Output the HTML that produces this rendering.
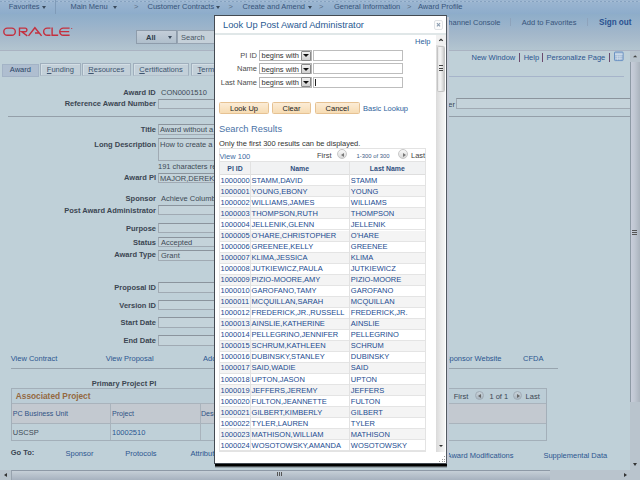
<!DOCTYPE html>
<html><head><meta charset="utf-8"><style>
html,body{margin:0;padding:0;width:640px;height:480px;overflow:hidden;position:relative;font-family:"Liberation Sans",sans-serif}
.t{position:absolute;white-space:nowrap}
.r{position:absolute}
.tri{position:absolute;width:0;height:0;border-left:2.5px solid transparent;border-right:2.5px solid transparent;border-top:3px solid #3a4a5c}
.tri2{position:absolute;width:0;height:0;border-left:2.5px solid transparent;border-right:2.5px solid transparent;border-bottom:3px solid #222}
.ltri{position:absolute;width:0;height:0;border-top:2px solid transparent;border-bottom:2px solid transparent;border-right:3px solid #666;left:2px;top:2px}
.rtri{position:absolute;width:0;height:0;border-top:2px solid transparent;border-bottom:2px solid transparent;border-left:3px solid #666;left:3px;top:2px}
.circ2{position:absolute;width:10px;height:10px;border-radius:50%;background:linear-gradient(#fafafa,#d8d8d8);border:1px solid #c8c8c8;box-sizing:border-box}
.circ{position:absolute;width:9px;height:9px;border-radius:50%;background:linear-gradient(#c9d3da,#aab6c0);border:1px solid #a0acb6;box-sizing:border-box}
</style></head><body>
<div class="r" style="left:0px;top:0px;width:640.00px;height:480.00px;background:#bfd0d8"></div>
<div class="r" style="left:0px;top:0px;width:640.00px;height:14.00px;background:linear-gradient(#9cb6d1,#8daccb)"></div>
<div class="r" style="left:0;top:1px;width:640px;height:1px;background:repeating-linear-gradient(90deg,#86a2c0 0 2px,#a6bdd5 2px 4px)"></div>
<div class="r" style="left:0px;top:14px;width:640.00px;height:36.00px;background:linear-gradient(#8eadc9 0px,#98b2cb 10px,#a1b6ca 18px,#a9bccc 26px,#b3c5d0 36px)"></div>
<div class="r" style="left:0px;top:50px;width:640.00px;height:1.00px;background:#aab3c2"></div>
<div class="t" style="left:8.75px;top:2.95px;font-size:7.5px;line-height:7.5px;color:#37547a;">Favorites</div>
<div class="tri" style="left:42px;top:6px"></div>
<div class="r" style="left:55px;top:0px;width:1.00px;height:14.00px;background:#7f9bb8"></div>
<div class="t" style="left:70.50px;top:2.95px;font-size:7.5px;line-height:7.5px;color:#37547a;">Main Menu</div>
<div class="tri" style="left:112.5px;top:6px"></div>
<div class="t" style="left:134.00px;top:2.95px;font-size:7.5px;line-height:7.5px;color:#5a6e85;">&gt;</div>
<div class="t" style="left:147.50px;top:2.95px;font-size:7.5px;line-height:7.5px;color:#37547a;">Customer Contracts</div>
<div class="tri" style="left:216px;top:6px"></div>
<div class="t" style="left:228.50px;top:2.95px;font-size:7.5px;line-height:7.5px;color:#5a6e85;">&gt;</div>
<div class="t" style="left:242.50px;top:2.95px;font-size:7.5px;line-height:7.5px;color:#37547a;">Create and Amend</div>
<div class="tri" style="left:307.5px;top:6px"></div>
<div class="t" style="left:319.00px;top:2.95px;font-size:7.5px;line-height:7.5px;color:#5a6e85;">&gt;</div>
<div class="t" style="left:334.00px;top:2.95px;font-size:7.5px;line-height:7.5px;color:#37547a;">General Information</div>
<div class="t" style="left:407.00px;top:2.95px;font-size:7.5px;line-height:7.5px;color:#5a6e85;">&gt;</div>
<div class="t" style="left:418.00px;top:2.95px;font-size:7.5px;line-height:7.5px;color:#37547a;">Award Profile</div>
<div class="t" style="right:139.50px;top:19.05px;font-size:7.5px;line-height:7.5px;color:#37547a;">Channel Console</div>
<div class="r" style="left:510px;top:18px;width:1.00px;height:8.00px;background:#8ea3bb"></div>
<div class="t" style="left:521.80px;top:19.05px;font-size:7.5px;line-height:7.5px;color:#37547a;">Add to Favorites</div>
<div class="r" style="left:587px;top:18px;width:1.00px;height:8.00px;background:#8ea3bb"></div>
<div class="t" style="left:599.00px;top:18.70px;font-size:8.15px;line-height:8.15px;color:#2b5190;font-weight:bold;">Sign out</div>
<svg class="r" style="left:0;top:0" width="80" height="50" viewBox="0 0 80 50"><g fill="none" stroke="#c4303f" stroke-width="1.4">
<rect x="3.8" y="28.1" width="11.5" height="7.1" rx="3.55"/>
<path d="M19.5 35.9V28.1H25.1A1.8 1.8 0 0 1 25.1 31.7H21.7L27.3 35.9"/>
<path d="M28.5 35.9L34.9 27.7L41.6 35.9M35 33H39.1"/>
<path d="M50.5 28.1H47.2A3.55 3.55 0 0 0 47.2 35.2H50.5"/>
<path d="M52.1 27.4V35.2H58.2"/>
<path d="M69.6 28.1H63.3A3.55 3.55 0 0 0 63.3 35.2H69.6M60.2 31.65H69.2"/>
</g><circle cx="71.7" cy="28.5" r="0.6" fill="#c4303f"/></svg>
<div class="r" style="left:136px;top:30px;width:41.00px;height:14.00px;background:linear-gradient(#c3cdd8,#b0bfcc);border:1px solid #8e9cab;box-sizing:border-box"></div>
<div class="t" style="left:146.00px;top:33.85px;font-size:7.5px;line-height:7.5px;color:#2c3a48;font-weight:bold;">All</div>
<div class="tri" style="left:168px;top:35.5px"></div>
<div class="r" style="left:176.5px;top:30px;width:38.50px;height:14.00px;background:#c5d0d9;border:1px solid #97a4b2;box-sizing:border-box"></div>
<div class="t" style="left:181.00px;top:34.05px;font-size:7.5px;line-height:7.5px;color:#4a5866;">Search</div>
<div class="t" style="left:471.50px;top:54.15px;font-size:7.5px;line-height:7.5px;color:#2c5690;">New Window</div>
<div class="r" style="left:518.6px;top:52.5px;width:0.90px;height:9.50px;background:#6b4a6e"></div>
<div class="t" style="left:523.70px;top:54.15px;font-size:7.5px;line-height:7.5px;color:#2c5690;">Help</div>
<div class="r" style="left:542.2px;top:52.5px;width:0.90px;height:9.50px;background:#6b4a6e"></div>
<div class="t" style="left:546.50px;top:54.15px;font-size:7.5px;line-height:7.5px;color:#2c5690;">Personalize Page</div>
<div class="r" style="left:609.2px;top:52.5px;width:0.90px;height:9.50px;background:#6b4a6e"></div>
<svg class="r" style="left:613px;top:51px" width="11" height="11" viewBox="0 0 11 11"><rect x="1.5" y="1" width="8.6" height="8.6" rx="0.8" fill="#a9bfd8" stroke="#6a92c3" stroke-width="1"/><rect x="2" y="2.6" width="7.6" height="1.1" fill="#d9e5f1"/><path d="M2.3 5.3H9.3M2.3 7.4H9.3M4.5 4.5V9.2M6.9 4.5V9.2" stroke="#d3dfec" stroke-width="0.6"/></svg>
<div class="r" style="left:2px;top:63.6px;width:36.70px;height:13.10px;background:#afbed0;border:1px solid #a3b3c6;box-sizing:border-box"></div>
<div class="t" style="left:-79.65px;width:200px;text-align:center;top:66.05px;font-size:7.5px;line-height:7.5px;color:#2a4466;">Award</div>
<div class="r" style="left:40px;top:63px;width:40.80px;height:12.60px;background:#c3d0d9;border:1px solid #a0afbd;border-bottom-color:#b3c1cc;box-sizing:border-box;box-shadow:inset 1px 1px 0 #d3dee5"></div>
<div class="t" style="left:-39.60px;width:200px;text-align:center;top:66.25px;font-size:7.5px;line-height:7.5px;color:#3d5470;"><u style="text-decoration-thickness:0.5px;text-underline-offset:0.8px">F</u>unding</div>
<div class="r" style="left:82px;top:63px;width:48.50px;height:12.60px;background:#c3d0d9;border:1px solid #a0afbd;border-bottom-color:#b3c1cc;box-sizing:border-box;box-shadow:inset 1px 1px 0 #d3dee5"></div>
<div class="t" style="left:6.25px;width:200px;text-align:center;top:66.25px;font-size:7.5px;line-height:7.5px;color:#3d5470;"><u style="text-decoration-thickness:0.5px;text-underline-offset:0.8px">R</u>esources</div>
<div class="r" style="left:132.6px;top:63px;width:56.80px;height:12.60px;background:#c3d0d9;border:1px solid #a0afbd;border-bottom-color:#b3c1cc;box-sizing:border-box;box-shadow:inset 1px 1px 0 #d3dee5"></div>
<div class="t" style="left:61.00px;width:200px;text-align:center;top:66.25px;font-size:7.5px;line-height:7.5px;color:#3d5470;"><u style="text-decoration-thickness:0.5px;text-underline-offset:0.8px">C</u>ertifications</div>
<div class="r" style="left:191.2px;top:63px;width:48.80px;height:12.60px;background:#c3d0d9;border:1px solid #a0afbd;border-bottom-color:#b3c1cc;box-sizing:border-box;box-shadow:inset 1px 1px 0 #d3dee5"></div>
<div class="t" style="left:197.50px;top:66.25px;font-size:7.5px;line-height:7.5px;color:#3d5470;"><u style="text-decoration-thickness:0.5px;text-underline-offset:0.8px">T</u>erms</div>
<div class="r" style="left:447px;top:75.8px;width:177.00px;height:1.00px;background:#a6b4ca"></div>
<div class="t" style="right:484.30px;top:89.05px;font-size:7.5px;line-height:7.5px;color:#3b4652;font-weight:bold;">Award ID</div>
<div class="t" style="left:161.00px;top:89.05px;font-size:7.5px;line-height:7.5px;color:#3e4a56;">CON0001510</div>
<div class="t" style="right:484.00px;top:99.65px;font-size:7.5px;line-height:7.5px;color:#3b4652;font-weight:bold;">Reference Award Number</div>
<div class="r" style="left:158px;top:99px;width:72.00px;height:10.00px;background:#c4d3da;border:1px solid #a0aab3;border-top-color:#8b949d;box-sizing:border-box"></div>
<div class="t" style="right:185.00px;top:100.65px;font-size:7.5px;line-height:7.5px;color:#3b4652;">er</div>
<div class="r" style="left:455.7px;top:98px;width:176.30px;height:11.30px;background:#c4d3da;border:1px solid #a0aab3;border-top-color:#8b949d;box-sizing:border-box"></div>
<div class="r" style="left:8px;top:116px;width:622.00px;height:1.00px;background:#949fa9"></div>
<div class="t" style="right:484.00px;top:126.15px;font-size:7.5px;line-height:7.5px;color:#3b4652;font-weight:bold;">Title</div>
<div class="r" style="left:158px;top:124px;width:72.00px;height:10.50px;background:#c4d3da;border:1px solid #a0aab3;border-top-color:#8b949d;box-sizing:border-box"></div>
<div class="t" style="left:160.00px;top:126.45px;font-size:7.5px;line-height:7.5px;color:#3e4a56;">Award without a</div>
<div class="t" style="right:484.00px;top:140.65px;font-size:7.5px;line-height:7.5px;color:#3b4652;font-weight:bold;">Long Description</div>
<div class="r" style="left:158px;top:138.3px;width:72.00px;height:22.90px;background:#c4d3da;border:1px solid #a0aab3;border-top-color:#8b949d;box-sizing:border-box"></div>
<div class="t" style="left:160.00px;top:140.65px;font-size:7.5px;line-height:7.5px;color:#3e4a56;">How to create a</div>
<div class="t" style="left:158.00px;top:163.15px;font-size:7.5px;line-height:7.5px;color:#3e4a56;">191 characters re</div>
<div class="t" style="right:484.00px;top:174.15px;font-size:7.5px;line-height:7.5px;color:#3b4652;font-weight:bold;">Award PI</div>
<div class="r" style="left:158px;top:172.5px;width:72.00px;height:10.00px;background:#c4d3da;border:1px solid #a0aab3;border-top-color:#8b949d;box-sizing:border-box"></div>
<div class="t" style="left:160.00px;top:174.65px;font-size:7.5px;line-height:7.5px;color:#3e4a56;">MAJOR,DEREK</div>
<div class="t" style="right:484.00px;top:195.45px;font-size:7.5px;line-height:7.5px;color:#3b4652;font-weight:bold;">Sponsor</div>
<div class="t" style="left:161.00px;top:195.45px;font-size:7.5px;line-height:7.5px;color:#3e4a56;">Achieve Columb</div>
<div class="t" style="right:484.00px;top:207.15px;font-size:7.5px;line-height:7.5px;color:#3b4652;font-weight:bold;">Post Award Administrator</div>
<div class="r" style="left:158px;top:205px;width:72.00px;height:10.00px;background:#c4d3da;border:1px solid #a0aab3;border-top-color:#8b949d;box-sizing:border-box"></div>
<div class="t" style="right:484.00px;top:224.65px;font-size:7.5px;line-height:7.5px;color:#3b4652;font-weight:bold;">Purpose</div>
<div class="r" style="left:158px;top:222.5px;width:72.00px;height:10.00px;background:#c4d3da;border:1px solid #a0aab3;border-top-color:#8b949d;box-sizing:border-box"></div>
<div class="t" style="right:484.00px;top:239.25px;font-size:7.5px;line-height:7.5px;color:#3b4652;font-weight:bold;">Status</div>
<div class="r" style="left:158px;top:237px;width:72.00px;height:9.80px;background:#c4d3da;border:1px solid #a0aab3;border-top-color:#8b949d;box-sizing:border-box"></div>
<div class="t" style="left:161.00px;top:239.45px;font-size:7.5px;line-height:7.5px;color:#3e4a56;">Accepted</div>
<div class="t" style="right:484.00px;top:251.45px;font-size:7.5px;line-height:7.5px;color:#3b4652;font-weight:bold;">Award Type</div>
<div class="r" style="left:158px;top:249.5px;width:72.00px;height:11.00px;background:#c4d3da;border:1px solid #a0aab3;border-top-color:#8b949d;box-sizing:border-box"></div>
<div class="t" style="left:161.00px;top:252.15px;font-size:7.5px;line-height:7.5px;color:#3e4a56;">Grant</div>
<div class="t" style="right:484.00px;top:284.25px;font-size:7.5px;line-height:7.5px;color:#3b4652;font-weight:bold;">Proposal ID</div>
<div class="r" style="left:158px;top:282px;width:72.00px;height:10.60px;background:#c4d3da;border:1px solid #a0aab3;border-top-color:#8b949d;box-sizing:border-box"></div>
<div class="t" style="right:484.00px;top:301.65px;font-size:7.5px;line-height:7.5px;color:#3b4652;font-weight:bold;">Version ID</div>
<div class="r" style="left:158px;top:299.6px;width:72.00px;height:10.80px;background:#c4d3da;border:1px solid #a0aab3;border-top-color:#8b949d;box-sizing:border-box"></div>
<div class="t" style="right:484.00px;top:319.15px;font-size:7.5px;line-height:7.5px;color:#3b4652;font-weight:bold;">Start Date</div>
<div class="r" style="left:158px;top:317px;width:72.00px;height:11.00px;background:#c4d3da;border:1px solid #a0aab3;border-top-color:#8b949d;box-sizing:border-box"></div>
<div class="t" style="right:484.00px;top:336.95px;font-size:7.5px;line-height:7.5px;color:#3b4652;font-weight:bold;">End Date</div>
<div class="r" style="left:158px;top:334.6px;width:72.00px;height:11.10px;background:#c4d3da;border:1px solid #a0aab3;border-top-color:#8b949d;box-sizing:border-box"></div>
<div class="t" style="left:10.70px;top:355.45px;font-size:7.5px;line-height:7.5px;color:#2c5690;">View Contract</div>
<div class="t" style="left:105.80px;top:355.45px;font-size:7.5px;line-height:7.5px;color:#2c5690;">View Proposal</div>
<div class="t" style="left:203.00px;top:355.45px;font-size:7.5px;line-height:7.5px;color:#2c5690;">Add</div>
<div class="t" style="right:138.50px;top:354.65px;font-size:7.5px;line-height:7.5px;color:#2c5690;">Sponsor Website</div>
<div class="t" style="left:523.00px;top:354.65px;font-size:7.5px;line-height:7.5px;color:#2c5690;">CFDA</div>
<div class="r" style="left:10.7px;top:368px;width:547.80px;height:1.00px;background:#98a4ae"></div>
<div class="t" style="left:91.70px;top:379.65px;font-size:7.5px;line-height:7.5px;color:#3b4652;font-weight:bold;">Primary Project PI</div>
<div class="r" style="left:10.7px;top:388px;width:535.90px;height:52.50px;border:1px solid #a3afb9;box-sizing:border-box;background:#bfd0d8"></div>
<div class="r" style="left:11.7px;top:389px;width:533.90px;height:14.50px;background:#bccdd6"></div>
<div class="t" style="left:15.80px;top:392.27px;font-size:8.3px;line-height:8.3px;color:#94693f;font-weight:bold;">Associated Project</div>
<div class="t" style="left:453.75px;top:392.65px;font-size:7.5px;line-height:7.5px;color:#3b4652;">First</div>
<div class="circ" style="left:474.7px;top:390.8px"><div class="ltri"></div></div>
<div class="t" style="left:489.40px;top:392.65px;font-size:7.5px;line-height:7.5px;color:#3b4652;">1 of 1</div>
<div class="circ" style="left:513px;top:390.8px"><div class="rtri"></div></div>
<div class="t" style="left:525.60px;top:392.65px;font-size:7.5px;line-height:7.5px;color:#3b4652;">Last</div>
<div class="r" style="left:11.7px;top:403px;width:533.90px;height:21.00px;background:#c3c9d0;border-top:1px solid #a9b3bc;border-bottom:1px solid #a9b3bc;box-sizing:border-box"></div>
<div class="r" style="left:110px;top:403px;width:1.00px;height:37.00px;background:#a9b3bc"></div>
<div class="r" style="left:200px;top:403px;width:1.00px;height:37.00px;background:#a9b3bc"></div>
<div class="t" style="left:12.80px;top:411.19px;font-size:7.1px;line-height:7.1px;color:#2f5385;">PC Business Unit</div>
<div class="t" style="left:112.00px;top:411.19px;font-size:7.1px;line-height:7.1px;color:#2f5385;">Project</div>
<div class="t" style="left:201.00px;top:411.19px;font-size:7.1px;line-height:7.1px;color:#2f5385;">Desc</div>
<div class="t" style="left:12.80px;top:429.15px;font-size:7.5px;line-height:7.5px;color:#3e4a56;">USCSP</div>
<div class="t" style="left:112.00px;top:429.15px;font-size:7.5px;line-height:7.5px;color:#2c5690;">10002510</div>
<div class="t" style="left:10.70px;top:448.65px;font-size:7.5px;line-height:7.5px;color:#3b4652;font-weight:bold;">Go To:</div>
<div class="t" style="left:65.50px;top:449.65px;font-size:7.5px;line-height:7.5px;color:#2c5690;">Sponsor</div>
<div class="t" style="left:125.30px;top:449.65px;font-size:7.5px;line-height:7.5px;color:#2c5690;">Protocols</div>
<div class="t" style="left:190.50px;top:449.65px;font-size:7.5px;line-height:7.5px;color:#2c5690;">Attributes</div>
<div class="t" style="right:126.50px;top:452.15px;font-size:7.5px;line-height:7.5px;color:#2c5690;">Award Modifications</div>
<div class="t" style="left:543.40px;top:452.15px;font-size:7.5px;line-height:7.5px;color:#2c5690;">Supplemental Data</div>
<div class="r" style="left:630px;top:51px;width:10.00px;height:419.00px;background:#b9c4cd"></div>
<div class="r" style="left:630.2px;top:62px;width:9.80px;height:340.00px;background:linear-gradient(90deg,#c8cdda,#c0c7d2 40%,#aab3bd);border-left:1px solid #8e9aa5;box-sizing:border-box"></div>
<div class="r" style="left:632px;top:229.8px;width:5.20px;height:0.80px;background:#555"></div>
<div class="r" style="left:632px;top:231.9px;width:5.20px;height:0.80px;background:#555"></div>
<div class="r" style="left:632px;top:234px;width:5.20px;height:0.80px;background:#555"></div>
<svg class="r" style="left:631px;top:53px" width="8" height="6" viewBox="0 0 8 6"><path d="M2 4.2L4.2 2.2L6.2 4.2Z" fill="#444"/></svg>
<div class="tri" style="left:632.5px;top:462.5px;border-top-color:#333"></div>
<div class="r" style="left:0px;top:469.8px;width:640.00px;height:10.20px;background:#b9c4cd"></div>
<div class="r" style="left:11.25px;top:470px;width:538.45px;height:10.00px;background:linear-gradient(#c6cfd7,#a7b2bf);border-top:1px solid #8e99a6;border-left:1px solid #98a3ae;box-sizing:border-box"></div>
<div class="ltri" style="left:3.5px;top:472.8px;border-right-color:#333"></div>
<div class="rtri" style="left:623.5px;top:472.8px;border-left-color:#333"></div>
<div class="r" style="left:630px;top:469.8px;width:10.00px;height:10.20px;background:#b9c4cd"></div>
<div class="r" style="left:277.2px;top:472px;width:0.80px;height:4.30px;background:#555"></div>
<div class="r" style="left:279.2px;top:472px;width:0.80px;height:4.30px;background:#555"></div>
<div class="r" style="left:281.2px;top:472px;width:0.80px;height:4.30px;background:#555"></div>
<div class="r" style="left:447px;top:17px;width:1.50px;height:446.00px;background:#c4cad6"></div>
<div class="r" style="left:215px;top:463px;width:232.00px;height:3.00px;background:#000"></div>
<div class="r" style="left:215px;top:466px;width:232.00px;height:2.00px;background:linear-gradient(rgba(0,0,0,.8),rgba(0,0,0,0))"></div>
<div class="r" style="left:214px;top:15px;width:233.00px;height:448.60px;background:#fff;border:1px solid #434a52;border-right:1.3px solid #535a62;box-sizing:border-box"></div>
<div class="t" style="left:223.00px;top:21.13px;font-size:9.3px;line-height:9.3px;color:#2a5a92;">Look Up Post Award Administrator</div>
<div class="r" style="left:433.5px;top:20.3px;width:9.00px;height:9.40px;border:1px solid #dfe2e5;box-sizing:border-box;border-radius:2px;background:#fbfbfb"></div>
<svg class="r" style="left:433.5px;top:20.3px" width="9" height="9.4" viewBox="0 0 9 9.4"><path d="M2.9 3.2L6.1 6.4M6.1 3.2L2.9 6.4" stroke="#8a9cb0" stroke-width="1.1"/></svg>
<div class="r" style="left:215px;top:33.3px;width:231.00px;height:1.70px;background:#e0e7e8"></div>
<div class="r" style="left:436.3px;top:35px;width:9.40px;height:417.00px;background:linear-gradient(90deg,#dadada,#ececec 60%,#f6f6f6);border-right:1px solid #fff;box-sizing:border-box"></div>
<div class="r" style="left:436.3px;top:35px;width:9.40px;height:10.00px;background:#f1f1f1"></div>
<svg class="r" style="left:437px;top:37px" width="8" height="6" viewBox="0 0 8 6"><path d="M2.2 3.9L4 2.3L5.8 3.9" fill="none" stroke="#333" stroke-width="1.1"/></svg>
<div class="r" style="left:437.3px;top:46px;width:7.50px;height:46.00px;background:linear-gradient(90deg,#e6e6e6,#f6f6f6 35%,#e2e2e2 70%,#c9c9c9);border:1px solid #c4c4c4;box-sizing:border-box;border-radius:1.5px"></div>
<div class="r" style="left:438.8px;top:65.4px;width:3.80px;height:0.70px;background:#444"></div>
<div class="r" style="left:438.8px;top:67.8px;width:3.80px;height:0.70px;background:#444"></div>
<div class="r" style="left:438.8px;top:70.2px;width:3.80px;height:0.70px;background:#444"></div>
<div class="tri" style="left:439.2px;top:445.2px;border-top-color:#333;border-left-width:2.2px;border-right-width:2.2px;border-top-width:2.6px"></div>
<div class="r" style="left:444px;top:456px;width:1.00px;height:1.00px;background:#999"></div>
<div class="r" style="left:441.5px;top:458.5px;width:1.00px;height:1.00px;background:#999"></div>
<div class="r" style="left:444px;top:458.5px;width:1.00px;height:1.00px;background:#999"></div>
<div class="r" style="left:439px;top:461px;width:1.00px;height:1.00px;background:#999"></div>
<div class="r" style="left:441.5px;top:461px;width:1.00px;height:1.00px;background:#999"></div>
<div class="r" style="left:444px;top:461px;width:1.00px;height:1.00px;background:#999"></div>
<div class="t" style="right:209.50px;top:38.35px;font-size:7.5px;line-height:7.5px;color:#2d5f9c;">Help</div>
<div class="t" style="right:383.00px;top:52.05px;font-size:7.5px;line-height:7.5px;color:#4d4d4d;">PI ID</div>
<div class="r" style="left:259px;top:50px;width:52.50px;height:11.00px;border:1px solid #b5b5b5;box-sizing:border-box;background:#fff"></div>
<div class="t" style="left:261.50px;top:52.45px;font-size:7.5px;line-height:7.5px;color:#333;">begins with</div>
<div class="r" style="left:300.6px;top:50.5px;width:10.40px;height:10.00px;background:linear-gradient(#f2f2f2,#cfcfcf);border:1px solid #8a8a8a;box-sizing:border-box;border-radius:1px"></div>
<div class="tri" style="left:302.8px;top:54.3px;border-top-color:#111;border-left-width:3px;border-right-width:3px;border-top-width:3.3px"></div>
<div class="r" style="left:313px;top:50px;width:90.00px;height:11.00px;border:1px solid #bdbdbd;box-sizing:border-box;background:#fff"></div>
<div class="t" style="right:383.00px;top:65.45px;font-size:7.5px;line-height:7.5px;color:#4d4d4d;">Name</div>
<div class="r" style="left:259px;top:63.3px;width:52.50px;height:11.00px;border:1px solid #b5b5b5;box-sizing:border-box;background:#fff"></div>
<div class="t" style="left:261.50px;top:65.75px;font-size:7.5px;line-height:7.5px;color:#333;">begins with</div>
<div class="r" style="left:300.6px;top:63.8px;width:10.40px;height:10.00px;background:linear-gradient(#f2f2f2,#cfcfcf);border:1px solid #8a8a8a;box-sizing:border-box;border-radius:1px"></div>
<div class="tri" style="left:302.8px;top:67.6px;border-top-color:#111;border-left-width:3px;border-right-width:3px;border-top-width:3.3px"></div>
<div class="r" style="left:313px;top:63.3px;width:90.00px;height:11.00px;border:1px solid #bdbdbd;box-sizing:border-box;background:#fff"></div>
<div class="t" style="right:383.00px;top:78.75px;font-size:7.5px;line-height:7.5px;color:#4d4d4d;">Last Name</div>
<div class="r" style="left:259px;top:76.7px;width:52.50px;height:11.00px;border:1px solid #b5b5b5;box-sizing:border-box;background:#fff"></div>
<div class="t" style="left:261.50px;top:79.15px;font-size:7.5px;line-height:7.5px;color:#333;">begins with</div>
<div class="r" style="left:300.6px;top:77.2px;width:10.40px;height:10.00px;background:linear-gradient(#f2f2f2,#cfcfcf);border:1px solid #8a8a8a;box-sizing:border-box;border-radius:1px"></div>
<div class="tri" style="left:302.8px;top:81.0px;border-top-color:#111;border-left-width:3px;border-right-width:3px;border-top-width:3.3px"></div>
<div class="r" style="left:313px;top:76.7px;width:90.00px;height:11.00px;border:1px solid #bdbdbd;box-sizing:border-box;background:#fff"></div>
<div class="r" style="left:314.5px;top:78.7px;width:0.80px;height:7.80px;background:#222"></div>
<div class="r" style="left:219.3px;top:102px;width:49.40px;height:12.40px;background:linear-gradient(#fcecd6,#f7dcb3);border:1px solid #e6c293;box-sizing:border-box;border-radius:1.5px"></div>
<div class="t" style="left:144.00px;width:200px;text-align:center;top:105.25px;font-size:7.5px;line-height:7.5px;color:#222;">Look Up</div>
<div class="r" style="left:272px;top:102px;width:39.00px;height:12.40px;background:linear-gradient(#fcecd6,#f7dcb3);border:1px solid #e6c293;box-sizing:border-box;border-radius:1.5px"></div>
<div class="t" style="left:191.50px;width:200px;text-align:center;top:105.25px;font-size:7.5px;line-height:7.5px;color:#222;">Clear</div>
<div class="r" style="left:314.6px;top:102px;width:45.40px;height:12.40px;background:linear-gradient(#fcecd6,#f7dcb3);border:1px solid #e6c293;box-sizing:border-box;border-radius:1.5px"></div>
<div class="t" style="left:237.30px;width:200px;text-align:center;top:105.25px;font-size:7.5px;line-height:7.5px;color:#222;">Cancel</div>
<div class="t" style="left:363.00px;top:105.25px;font-size:7.5px;line-height:7.5px;color:#2d5f9c;">Basic Lookup</div>
<div class="t" style="left:219.00px;top:124.63px;font-size:9.3px;line-height:9.3px;color:#4a72a6;">Search Results</div>
<div class="t" style="left:219.00px;top:140.05px;font-size:7.5px;line-height:7.5px;color:#333;">Only the first 300 results can be displayed.</div>
<div class="r" style="left:219px;top:148px;width:206.50px;height:303.50px;border:1px solid #e3e3e3;box-sizing:border-box;background:#fff"></div>
<div class="t" style="left:219.50px;top:152.65px;font-size:7.5px;line-height:7.5px;color:#3d6ca3;">View 100</div>
<div class="t" style="left:317.00px;top:152.45px;font-size:7.5px;line-height:7.5px;color:#444;">First</div>
<div class="circ2" style="left:337px;top:148.5px"><div class="ltri" style="left:3px;top:3px;border-right-color:#777"></div></div>
<div class="t" style="left:356.50px;top:153.81px;font-size:5.9px;line-height:5.9px;color:#3d5a85;">1-300 of 300</div>
<div class="circ2" style="left:398px;top:148.5px"><div class="rtri" style="left:4px;top:3px;border-left-color:#777"></div></div>
<div class="t" style="left:411.00px;top:152.45px;font-size:7.5px;line-height:7.5px;color:#444;">Last</div>
<div class="r" style="left:220px;top:161.3px;width:204.50px;height:14.10px;background:#f1f2f3;border-top:1px solid #e3e3e3;border-bottom:1px solid #dedede;box-sizing:border-box"></div>
<div class="t" style="left:135.00px;width:200px;text-align:center;top:166.36px;font-size:6.9px;line-height:6.9px;color:#2f4f80;font-weight:bold;">PI ID</div>
<div class="t" style="left:199.70px;width:200px;text-align:center;top:166.36px;font-size:6.9px;line-height:6.9px;color:#2f4f80;font-weight:bold;">Name</div>
<div class="t" style="left:287.30px;width:200px;text-align:center;top:166.36px;font-size:6.9px;line-height:6.9px;color:#2f4f80;font-weight:bold;">Last Name</div>
<div class="r" style="left:220px;top:175.4px;width:204.50px;height:11.02px;background:#ffffff;border-bottom:1px solid #e4e4e4;box-sizing:border-box"></div>
<div class="t" style="left:220.50px;top:177.15px;font-size:7.5px;line-height:7.5px;color:#1b4b90;">1000000</div>
<div class="t" style="left:251.60px;top:177.15px;font-size:7.5px;line-height:7.5px;color:#1b4b90;">STAMM,DAVID</div>
<div class="t" style="left:350.80px;top:177.15px;font-size:7.5px;line-height:7.5px;color:#1b4b90;">STAMM</div>
<div class="r" style="left:220px;top:186.42000000000002px;width:204.50px;height:11.02px;background:#f4f4f4;border-bottom:1px solid #e4e4e4;box-sizing:border-box"></div>
<div class="t" style="left:220.50px;top:188.17px;font-size:7.5px;line-height:7.5px;color:#1b4b90;">1000001</div>
<div class="t" style="left:251.60px;top:188.17px;font-size:7.5px;line-height:7.5px;color:#1b4b90;">YOUNG,EBONY</div>
<div class="t" style="left:350.80px;top:188.17px;font-size:7.5px;line-height:7.5px;color:#1b4b90;">YOUNG</div>
<div class="r" style="left:220px;top:197.44px;width:204.50px;height:11.02px;background:#ffffff;border-bottom:1px solid #e4e4e4;box-sizing:border-box"></div>
<div class="t" style="left:220.50px;top:199.19px;font-size:7.5px;line-height:7.5px;color:#1b4b90;">1000002</div>
<div class="t" style="left:251.60px;top:199.19px;font-size:7.5px;line-height:7.5px;color:#1b4b90;">WILLIAMS,JAMES</div>
<div class="t" style="left:350.80px;top:199.19px;font-size:7.5px;line-height:7.5px;color:#1b4b90;">WILLIAMS</div>
<div class="r" style="left:220px;top:208.46px;width:204.50px;height:11.02px;background:#f4f4f4;border-bottom:1px solid #e4e4e4;box-sizing:border-box"></div>
<div class="t" style="left:220.50px;top:210.21px;font-size:7.5px;line-height:7.5px;color:#1b4b90;">1000003</div>
<div class="t" style="left:251.60px;top:210.21px;font-size:7.5px;line-height:7.5px;color:#1b4b90;">THOMPSON,RUTH</div>
<div class="t" style="left:350.80px;top:210.21px;font-size:7.5px;line-height:7.5px;color:#1b4b90;">THOMPSON</div>
<div class="r" style="left:220px;top:219.48000000000002px;width:204.50px;height:11.02px;background:#ffffff;border-bottom:1px solid #e4e4e4;box-sizing:border-box"></div>
<div class="t" style="left:220.50px;top:221.23px;font-size:7.5px;line-height:7.5px;color:#1b4b90;">1000004</div>
<div class="t" style="left:251.60px;top:221.23px;font-size:7.5px;line-height:7.5px;color:#1b4b90;">JELLENIK,GLENN</div>
<div class="t" style="left:350.80px;top:221.23px;font-size:7.5px;line-height:7.5px;color:#1b4b90;">JELLENIK</div>
<div class="r" style="left:220px;top:230.5px;width:204.50px;height:11.02px;background:#f4f4f4;border-bottom:1px solid #e4e4e4;box-sizing:border-box"></div>
<div class="t" style="left:220.50px;top:232.25px;font-size:7.5px;line-height:7.5px;color:#1b4b90;">1000005</div>
<div class="t" style="left:251.60px;top:232.25px;font-size:7.5px;line-height:7.5px;color:#1b4b90;">O'HARE,CHRISTOPHER</div>
<div class="t" style="left:350.80px;top:232.25px;font-size:7.5px;line-height:7.5px;color:#1b4b90;">O'HARE</div>
<div class="r" style="left:220px;top:241.52px;width:204.50px;height:11.02px;background:#ffffff;border-bottom:1px solid #e4e4e4;box-sizing:border-box"></div>
<div class="t" style="left:220.50px;top:243.27px;font-size:7.5px;line-height:7.5px;color:#1b4b90;">1000006</div>
<div class="t" style="left:251.60px;top:243.27px;font-size:7.5px;line-height:7.5px;color:#1b4b90;">GREENEE,KELLY</div>
<div class="t" style="left:350.80px;top:243.27px;font-size:7.5px;line-height:7.5px;color:#1b4b90;">GREENEE</div>
<div class="r" style="left:220px;top:252.54000000000002px;width:204.50px;height:11.02px;background:#f4f4f4;border-bottom:1px solid #e4e4e4;box-sizing:border-box"></div>
<div class="t" style="left:220.50px;top:254.29px;font-size:7.5px;line-height:7.5px;color:#1b4b90;">1000007</div>
<div class="t" style="left:251.60px;top:254.29px;font-size:7.5px;line-height:7.5px;color:#1b4b90;">KLIMA,JESSICA</div>
<div class="t" style="left:350.80px;top:254.29px;font-size:7.5px;line-height:7.5px;color:#1b4b90;">KLIMA</div>
<div class="r" style="left:220px;top:263.56px;width:204.50px;height:11.02px;background:#ffffff;border-bottom:1px solid #e4e4e4;box-sizing:border-box"></div>
<div class="t" style="left:220.50px;top:265.31px;font-size:7.5px;line-height:7.5px;color:#1b4b90;">1000008</div>
<div class="t" style="left:251.60px;top:265.31px;font-size:7.5px;line-height:7.5px;color:#1b4b90;">JUTKIEWICZ,PAULA</div>
<div class="t" style="left:350.80px;top:265.31px;font-size:7.5px;line-height:7.5px;color:#1b4b90;">JUTKIEWICZ</div>
<div class="r" style="left:220px;top:274.58px;width:204.50px;height:11.02px;background:#f4f4f4;border-bottom:1px solid #e4e4e4;box-sizing:border-box"></div>
<div class="t" style="left:220.50px;top:276.33px;font-size:7.5px;line-height:7.5px;color:#1b4b90;">1000009</div>
<div class="t" style="left:251.60px;top:276.33px;font-size:7.5px;line-height:7.5px;color:#1b4b90;">PIZIO-MOORE,AMY</div>
<div class="t" style="left:350.80px;top:276.33px;font-size:7.5px;line-height:7.5px;color:#1b4b90;">PIZIO-MOORE</div>
<div class="r" style="left:220px;top:285.6px;width:204.50px;height:11.02px;background:#ffffff;border-bottom:1px solid #e4e4e4;box-sizing:border-box"></div>
<div class="t" style="left:220.50px;top:287.35px;font-size:7.5px;line-height:7.5px;color:#1b4b90;">1000010</div>
<div class="t" style="left:251.60px;top:287.35px;font-size:7.5px;line-height:7.5px;color:#1b4b90;">GAROFANO,TAMY</div>
<div class="t" style="left:350.80px;top:287.35px;font-size:7.5px;line-height:7.5px;color:#1b4b90;">GAROFANO</div>
<div class="r" style="left:220px;top:296.62px;width:204.50px;height:11.02px;background:#f4f4f4;border-bottom:1px solid #e4e4e4;box-sizing:border-box"></div>
<div class="t" style="left:220.50px;top:298.37px;font-size:7.5px;line-height:7.5px;color:#1b4b90;">1000011</div>
<div class="t" style="left:251.60px;top:298.37px;font-size:7.5px;line-height:7.5px;color:#1b4b90;">MCQUILLAN,SARAH</div>
<div class="t" style="left:350.80px;top:298.37px;font-size:7.5px;line-height:7.5px;color:#1b4b90;">MCQUILLAN</div>
<div class="r" style="left:220px;top:307.64px;width:204.50px;height:11.02px;background:#ffffff;border-bottom:1px solid #e4e4e4;box-sizing:border-box"></div>
<div class="t" style="left:220.50px;top:309.39px;font-size:7.5px;line-height:7.5px;color:#1b4b90;">1000012</div>
<div class="t" style="left:251.60px;top:309.39px;font-size:7.5px;line-height:7.5px;color:#1b4b90;">FREDERICK,JR.,RUSSELL</div>
<div class="t" style="left:350.80px;top:309.39px;font-size:7.5px;line-height:7.5px;color:#1b4b90;">FREDERICK,JR.</div>
<div class="r" style="left:220px;top:318.65999999999997px;width:204.50px;height:11.02px;background:#f4f4f4;border-bottom:1px solid #e4e4e4;box-sizing:border-box"></div>
<div class="t" style="left:220.50px;top:320.41px;font-size:7.5px;line-height:7.5px;color:#1b4b90;">1000013</div>
<div class="t" style="left:251.60px;top:320.41px;font-size:7.5px;line-height:7.5px;color:#1b4b90;">AINSLIE,KATHERINE</div>
<div class="t" style="left:350.80px;top:320.41px;font-size:7.5px;line-height:7.5px;color:#1b4b90;">AINSLIE</div>
<div class="r" style="left:220px;top:329.68px;width:204.50px;height:11.02px;background:#ffffff;border-bottom:1px solid #e4e4e4;box-sizing:border-box"></div>
<div class="t" style="left:220.50px;top:331.43px;font-size:7.5px;line-height:7.5px;color:#1b4b90;">1000014</div>
<div class="t" style="left:251.60px;top:331.43px;font-size:7.5px;line-height:7.5px;color:#1b4b90;">PELLEGRINO,JENNIFER</div>
<div class="t" style="left:350.80px;top:331.43px;font-size:7.5px;line-height:7.5px;color:#1b4b90;">PELLEGRINO</div>
<div class="r" style="left:220px;top:340.7px;width:204.50px;height:11.02px;background:#f4f4f4;border-bottom:1px solid #e4e4e4;box-sizing:border-box"></div>
<div class="t" style="left:220.50px;top:342.45px;font-size:7.5px;line-height:7.5px;color:#1b4b90;">1000015</div>
<div class="t" style="left:251.60px;top:342.45px;font-size:7.5px;line-height:7.5px;color:#1b4b90;">SCHRUM,KATHLEEN</div>
<div class="t" style="left:350.80px;top:342.45px;font-size:7.5px;line-height:7.5px;color:#1b4b90;">SCHRUM</div>
<div class="r" style="left:220px;top:351.72px;width:204.50px;height:11.02px;background:#ffffff;border-bottom:1px solid #e4e4e4;box-sizing:border-box"></div>
<div class="t" style="left:220.50px;top:353.47px;font-size:7.5px;line-height:7.5px;color:#1b4b90;">1000016</div>
<div class="t" style="left:251.60px;top:353.47px;font-size:7.5px;line-height:7.5px;color:#1b4b90;">DUBINSKY,STANLEY</div>
<div class="t" style="left:350.80px;top:353.47px;font-size:7.5px;line-height:7.5px;color:#1b4b90;">DUBINSKY</div>
<div class="r" style="left:220px;top:362.74px;width:204.50px;height:11.02px;background:#f4f4f4;border-bottom:1px solid #e4e4e4;box-sizing:border-box"></div>
<div class="t" style="left:220.50px;top:364.49px;font-size:7.5px;line-height:7.5px;color:#1b4b90;">1000017</div>
<div class="t" style="left:251.60px;top:364.49px;font-size:7.5px;line-height:7.5px;color:#1b4b90;">SAID,WADIE</div>
<div class="t" style="left:350.80px;top:364.49px;font-size:7.5px;line-height:7.5px;color:#1b4b90;">SAID</div>
<div class="r" style="left:220px;top:373.76px;width:204.50px;height:11.02px;background:#ffffff;border-bottom:1px solid #e4e4e4;box-sizing:border-box"></div>
<div class="t" style="left:220.50px;top:375.51px;font-size:7.5px;line-height:7.5px;color:#1b4b90;">1000018</div>
<div class="t" style="left:251.60px;top:375.51px;font-size:7.5px;line-height:7.5px;color:#1b4b90;">UPTON,JASON</div>
<div class="t" style="left:350.80px;top:375.51px;font-size:7.5px;line-height:7.5px;color:#1b4b90;">UPTON</div>
<div class="r" style="left:220px;top:384.78px;width:204.50px;height:11.02px;background:#f4f4f4;border-bottom:1px solid #e4e4e4;box-sizing:border-box"></div>
<div class="t" style="left:220.50px;top:386.53px;font-size:7.5px;line-height:7.5px;color:#1b4b90;">1000019</div>
<div class="t" style="left:251.60px;top:386.53px;font-size:7.5px;line-height:7.5px;color:#1b4b90;">JEFFERS,JEREMY</div>
<div class="t" style="left:350.80px;top:386.53px;font-size:7.5px;line-height:7.5px;color:#1b4b90;">JEFFERS</div>
<div class="r" style="left:220px;top:395.79999999999995px;width:204.50px;height:11.02px;background:#ffffff;border-bottom:1px solid #e4e4e4;box-sizing:border-box"></div>
<div class="t" style="left:220.50px;top:397.55px;font-size:7.5px;line-height:7.5px;color:#1b4b90;">1000020</div>
<div class="t" style="left:251.60px;top:397.55px;font-size:7.5px;line-height:7.5px;color:#1b4b90;">FULTON,JEANNETTE</div>
<div class="t" style="left:350.80px;top:397.55px;font-size:7.5px;line-height:7.5px;color:#1b4b90;">FULTON</div>
<div class="r" style="left:220px;top:406.82px;width:204.50px;height:11.02px;background:#f4f4f4;border-bottom:1px solid #e4e4e4;box-sizing:border-box"></div>
<div class="t" style="left:220.50px;top:408.57px;font-size:7.5px;line-height:7.5px;color:#1b4b90;">1000021</div>
<div class="t" style="left:251.60px;top:408.57px;font-size:7.5px;line-height:7.5px;color:#1b4b90;">GILBERT,KIMBERLY</div>
<div class="t" style="left:350.80px;top:408.57px;font-size:7.5px;line-height:7.5px;color:#1b4b90;">GILBERT</div>
<div class="r" style="left:220px;top:417.84000000000003px;width:204.50px;height:11.02px;background:#ffffff;border-bottom:1px solid #e4e4e4;box-sizing:border-box"></div>
<div class="t" style="left:220.50px;top:419.59px;font-size:7.5px;line-height:7.5px;color:#1b4b90;">1000022</div>
<div class="t" style="left:251.60px;top:419.59px;font-size:7.5px;line-height:7.5px;color:#1b4b90;">TYLER,LAUREN</div>
<div class="t" style="left:350.80px;top:419.59px;font-size:7.5px;line-height:7.5px;color:#1b4b90;">TYLER</div>
<div class="r" style="left:220px;top:428.86px;width:204.50px;height:11.02px;background:#f4f4f4;border-bottom:1px solid #e4e4e4;box-sizing:border-box"></div>
<div class="t" style="left:220.50px;top:430.61px;font-size:7.5px;line-height:7.5px;color:#1b4b90;">1000023</div>
<div class="t" style="left:251.60px;top:430.61px;font-size:7.5px;line-height:7.5px;color:#1b4b90;">MATHISON,WILLIAM</div>
<div class="t" style="left:350.80px;top:430.61px;font-size:7.5px;line-height:7.5px;color:#1b4b90;">MATHISON</div>
<div class="r" style="left:220px;top:439.88px;width:204.50px;height:11.02px;background:#ffffff;border-bottom:1px solid #e4e4e4;box-sizing:border-box"></div>
<div class="t" style="left:220.50px;top:441.63px;font-size:7.5px;line-height:7.5px;color:#1b4b90;">1000024</div>
<div class="t" style="left:251.60px;top:441.63px;font-size:7.5px;line-height:7.5px;color:#1b4b90;">WOSOTOWSKY,AMANDA</div>
<div class="t" style="left:350.80px;top:441.63px;font-size:7.5px;line-height:7.5px;color:#1b4b90;">WOSOTOWSKY</div>
<div class="r" style="left:250px;top:161.5px;width:1.00px;height:289.50px;background:#e2e2e2"></div>
<div class="r" style="left:349px;top:161.5px;width:1.00px;height:289.50px;background:#e2e2e2"></div>
</body></html>
